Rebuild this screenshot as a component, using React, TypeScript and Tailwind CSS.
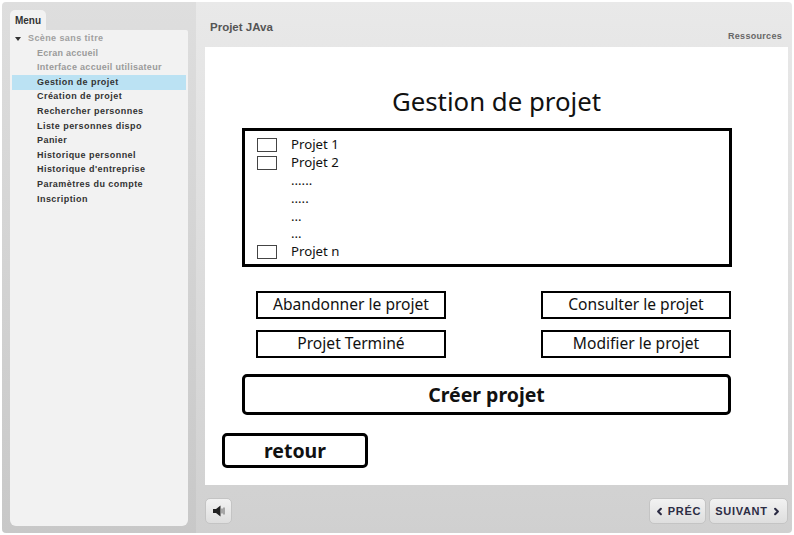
import type { ReactNode } from 'react';
import { ChevronLeft, ChevronRight } from 'lucide-react';

const menuItems = [
  { label: 'Ecran accueil', tone: 'text-[#9a9a9a] tracking-[0.25px]' },
  { label: 'Interface accueil utilisateur', tone: 'text-[#9a9a9a] tracking-[0.3px]' },
  { label: 'Gestion de projet', tone: 'text-[#333333] bg-[#bbe2f3]' },
  { label: 'Création de projet', tone: 'text-[#333333]' },
  { label: 'Rechercher personnes', tone: 'text-[#333333]' },
  { label: 'Liste personnes dispo', tone: 'text-[#333333]' },
  { label: 'Panier', tone: 'text-[#333333]' },
  { label: 'Historique personnel', tone: 'text-[#333333]' },
  { label: "Historique d'entreprise", tone: 'text-[#333333]' },
  { label: 'Paramètres du compte', tone: 'text-[#333333]' },
  { label: 'Inscription', tone: 'text-[#333333]' },
];

const projectRows = [
  { label: 'Projet 1', box: true },
  { label: 'Projet 2', box: true },
  { label: '......', box: false },
  { label: '.....', box: false },
  { label: '...', box: false },
  { label: '...', box: false },
  { label: 'Projet n', box: true },
];

function ActionButton({ label }: { label: string }) {
  return (
    <div className="w-[190px] h-[28px] border-[2px] border-black flex items-center justify-center pb-[1px] text-[15.6px] text-[#111]">
      {label}
    </div>
  );
}

function NavButton({ children, width }: { children: ReactNode; width: string }) {
  return (
    <div
      className={`${width} h-[26px] rounded-[5px] border border-[#c4c4c4] bg-gradient-to-b from-[#f2f2f2] to-[#dedede] flex items-center justify-center gap-[3px] font-['Liberation_Sans',sans-serif] font-bold text-[11px] tracking-[0.7px] text-[#2c2c44]`}
    >
      {children}
    </div>
  );
}

export default function App() {
  return (
    <div className="w-[794px] h-[535px] bg-white overflow-hidden p-[2px] font-['Liberation_Sans',sans-serif]">
      <div className="flex h-[531px] rounded-[4px] overflow-hidden">
        {/* menu */}
        <div className="w-[194px] shrink-0 bg-gradient-to-b from-[#dedede] to-[#c8c8c8] pt-[8px] pl-[8px] pr-[8px] pb-[7px] flex flex-col">
          <div className="w-[36px] h-[20px] rounded-t-[5px] bg-[#f2f2f2] flex items-center justify-center text-[10px] font-bold text-[#333]">
            Menu
          </div>
          <div className="flex-1 bg-[#f2f2f2] rounded-b-[6px] rounded-tr-[2px] pt-[1.5px] pl-[2px] pr-[2px] text-[9px] font-bold tracking-[0.45px]">
            <div className="h-[14.6px] flex items-center text-[#a0a0a0] tracking-[0.4px]">
              <span className="w-0 h-0 ml-[3px] mr-[7px] border-l-[3.5px] border-r-[3.5px] border-t-[4px] border-l-transparent border-r-transparent border-t-[#333]" />
              Scène sans titre
            </div>
            {menuItems.map((item) => (
              <div key={item.label} className={`h-[14.6px] flex items-center pl-[25px] ${item.tone}`}>
                {item.label}
              </div>
            ))}
          </div>
        </div>

        {/* main */}
        <div className="flex-1 flex flex-col bg-gradient-to-b from-[#e9e9e9] to-[#d0d0d0] pl-[9px]">
          <div className="w-[583px] h-[45px] shrink-0 relative">
            <div className="pt-[17px] pl-[5px] text-[11.5px] font-bold text-[#555]">Projet JAva</div>
            <div className="absolute right-[6px] top-[28px] text-[9px] font-bold tracking-[0.3px] text-[#666]">Ressources</div>
          </div>

          <div className="w-[583px] h-[438px] shrink-0 bg-white font-['Noto_Sans','Open_Sans',sans-serif] flex flex-col pl-[37px]">
            <h1 className="w-[583px] -ml-[37px] mt-[36px] h-[36px] flex items-center justify-center text-[25.8px] text-[#111]">
              Gestion de projet
            </h1>
            <div className="w-[490px] h-[139px] mt-[9px] border-[3px] border-black pt-[5px] pl-[12px]">
              {projectRows.map((row, i) => (
                <div key={i} className="h-[17.83px] flex items-center text-[13.2px] leading-none text-[#111]">
                  <span className="w-[20px] shrink-0">
                    {row.box && <span className="block w-[20px] h-[14px] border border-[#444]" />}
                  </span>
                  <span className="ml-[14px]">{row.label}</span>
                </div>
              ))}
            </div>
            <div className="w-[489px] mt-[24px] pl-[14px] flex flex-col gap-[11px]">
              <div className="flex justify-between">
                <ActionButton label="Abandonner le projet" />
                <ActionButton label="Consulter le projet" />
              </div>
              <div className="flex justify-between">
                <ActionButton label="Projet Terminé" />
                <ActionButton label="Modifier le projet" />
              </div>
            </div>
            <div className="w-[489px] h-[41px] mt-[16px] border-[3px] border-black rounded-[5px] flex items-center justify-center pt-[1px] text-[19.5px] font-bold text-[#111]">
              Créer projet
            </div>
            <div className="w-[146px] h-[35px] mt-[18px] -ml-[20px] border-[3px] border-black rounded-[5px] flex items-center justify-center text-[19.5px] font-bold text-[#111]">
              retour
            </div>
          </div>

          <div className="w-[583px] flex-1 flex items-start justify-between pt-[13px]">
            <NavButton width="w-[27px]">
              <svg width="14" height="14" viewBox="0 0 14 14">
                <path d="M1 5h3l4.5-3.5v11L4 9H1z" fill="#222" />
                <path d="M10 4.5v5M12 3.5v7" stroke="#8a8a8a" strokeWidth="1.4" fill="none" />
              </svg>
            </NavButton>
            <div className="flex gap-[3px]">
              <NavButton width="w-[57px]">
                <ChevronLeft size={11} strokeWidth={4.5} />
                PRÉC
              </NavButton>
              <NavButton width="w-[79px]">
                SUIVANT
                <ChevronRight size={11} strokeWidth={4.5} />
              </NavButton>
            </div>
          </div>
        </div>
      </div>
    </div>
  );
}
